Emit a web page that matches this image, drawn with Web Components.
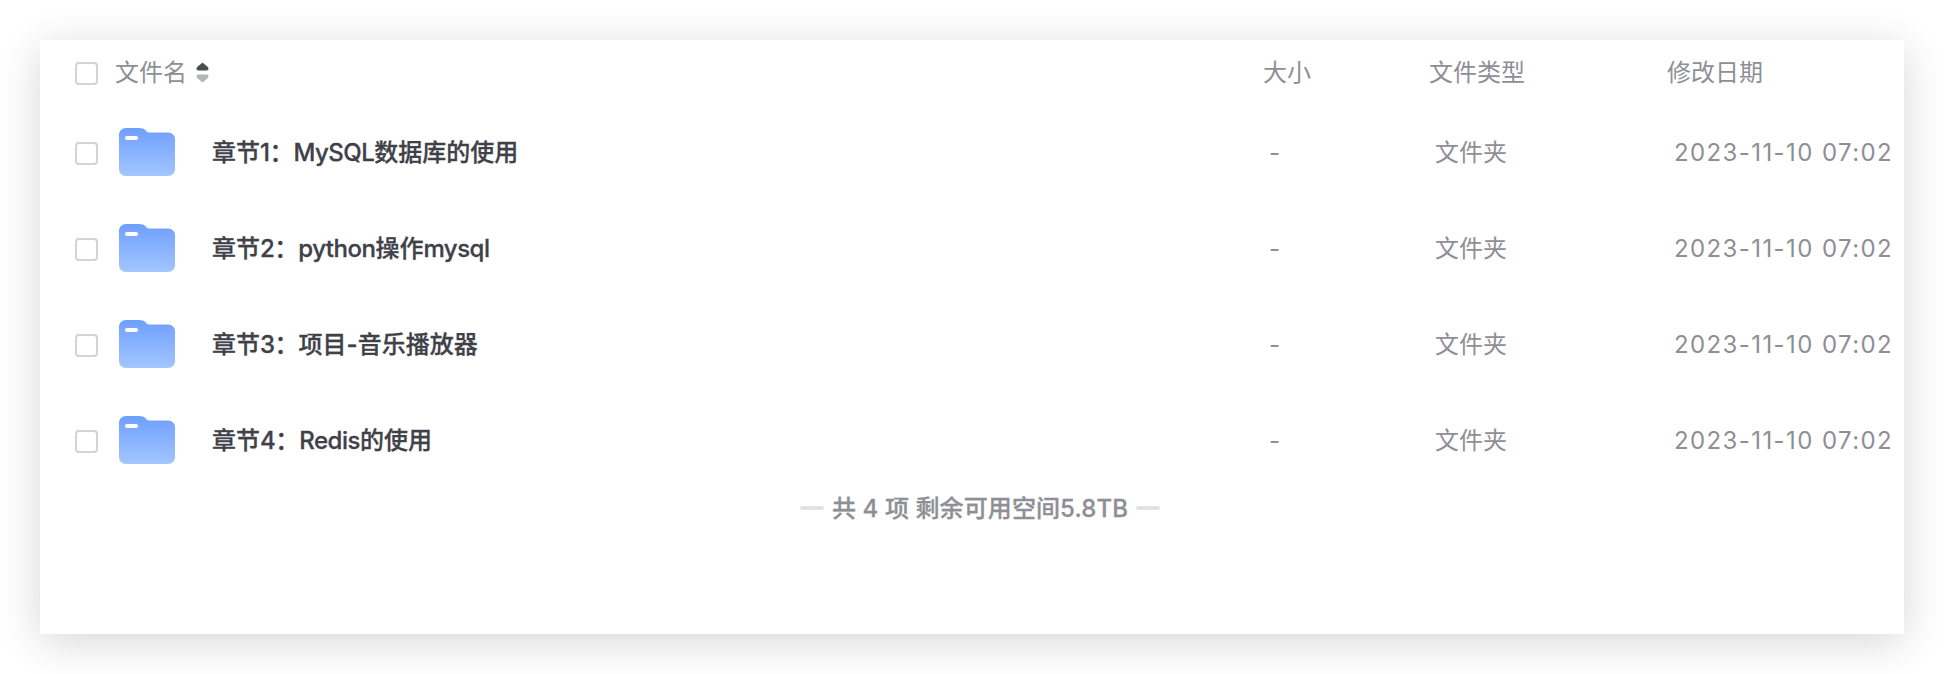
<!DOCTYPE html>
<html lang="zh">
<head>
<meta charset="utf-8">
<title>文件列表</title>
<style>
    html, body {
        margin: 0;
        background: #fff;
    }

    body {
        padding: 40px 40px 40px;
        height: 674px;
        box-sizing: border-box;
        overflow: hidden;
        font-family: Inter, "Noto Sans CJK SC", sans-serif;
    }

    .latin {
        letter-spacing: -0.5px;
    }
</style>
</head>
<body>

<template id="file-check-template">
    <style>
        :host {
            display: block;
            width: 23px;
            height: 23px;
            margin-top: 2px;
            box-sizing: border-box;
            border: 2px solid #d2d3d6;
            border-radius: 4px;
            background: #fff;
        }
    </style>
</template>

<template id="folder-icon-template">
    <style>
        :host {
            display: block;
            width: 56px;
            height: 48px;
        }

        svg {
            display: block;
        }
    </style>
    <svg width="56" height="48" viewBox="0 0 56 48">
        <defs>
            <linearGradient id="folderFill" x1="0" y1="0" x2="0" y2="1">
                <stop offset="0" stop-color="#6f9fff" />
                <stop offset="1" stop-color="#a3c6ff" />
            </linearGradient>
        </defs>
        <path fill="url(#folderFill)" d="M7 0H20C23.5 0 25.5 1.2 27.5 3.2C28.6 4.3 29.5 4.5 31 4.5H49C53 4.5 56 7.5 56 11V41C56 45 53 48 49 48H7C3 48 0 45 0 41V7C0 3 3 0 7 0Z" />
        <rect x="6" y="8" width="13" height="4" rx="2" fill="#fff" />
    </svg>
</template>

<template id="sort-caret-template">
    <style>
        :host {
            display: inline-block;
            width: 13px;
            height: 21px;
        }

        svg {
            display: block;
        }
    </style>
    <svg width="13" height="21" viewBox="0 0 13 21">
        <path fill="#4b4c50" d="M6.5 0.5L11.5 4.8C13 6.2 12.8 8.5 10.5 8.5H2.5C0.2 8.5 0 6.2 1.5 4.8Z" />
        <path fill="#b4b5b8" d="M6.5 20.5L11.5 16.2C13 14.8 12.8 12.5 10.5 12.5H2.5C0.2 12.5 0 14.8 1.5 16.2Z" />
    </svg>
</template>

<template id="file-header-template">
    <style>
        :host {
            display: grid;
            grid-template-columns: 1188px 166px 238px 1fr;
            align-items: center;
            height: 64px;
            padding-left: 35px;
            color: #8e8f95;
            font-size: 24px;
        }

        .label {
            padding-bottom: 4px;
        }

        .name {
            display: flex;
            align-items: center;
        }

        file-check {
            margin-right: 17px;
        }

        sort-caret {
            margin-left: 9px;
        }
    </style>
    <div class="name">
        <file-check></file-check>
        <span class="label">文件名</span>
        <sort-caret></sort-caret>
    </div>
    <div class="label">大小</div>
    <div class="label">文件类型</div>
    <div class="label">修改日期</div>
</template>

<template id="file-row-template">
    <style>
        :host {
            display: grid;
            grid-template-columns: 1188px 166px 238px 1fr;
            align-items: center;
            height: 96px;
            padding-left: 35px;
            color: #8e8f95;
            font-size: 24px;
        }

        .name {
            display: flex;
            align-items: center;
        }

        folder-icon {
            margin-left: 21px;
            margin-right: 37px;
        }

        .title {
            padding-bottom: 4px;
            color: #3f4149;
            font-weight: 500;
            -webkit-text-stroke: 0.3px #3f4149;
        }

        .size {
            padding-left: 6px;
        }

        .type {
            padding-left: 6px;
            padding-bottom: 4px;
        }

        .date {
            padding-left: 7px;
            letter-spacing: 1.4px;
            white-space: nowrap;
        }
    </style>
    <div class="name">
        <file-check></file-check>
        <folder-icon></folder-icon>
        <span class="title"><slot></slot></span>
    </div>
    <div class="size"></div>
    <div class="type"></div>
    <div class="date"></div>
</template>

<template id="list-summary-template">
    <style>
        :host {
            display: flex;
            justify-content: center;
            align-items: center;
            gap: 8px;
            height: 40px;
            padding-left: 16px;
            color: #8e8f95;
            font-size: 24px;
            font-weight: 500;
            -webkit-text-stroke: 0.3px #8e8f95;
            letter-spacing: 0.1px;
        }

        .text {
            padding-bottom: 4px;
        }

        .dash {
            width: 24px;
            height: 4px;
            border-radius: 2px;
            background: #e1e2e5;
        }
    </style>
    <span class="dash"></span>
    <span class="text"><slot></slot></span>
    <span class="dash"></span>
</template>

<template id="file-panel-template">
    <style>
        :host {
            display: block;
            height: 594px;
            background: #fff;
            box-shadow: 0 8px 40px rgba(0, 0, 0, 0.16);
        }
    </style>
    <file-header></file-header>
    <slot></slot>
    <list-summary><slot name="summary"></slot></list-summary>
</template>

<file-panel>
    <file-row size="-" type="文件夹" date="2023-11-10 07:02">章节<span class="latin">1</span>：<span class="latin">MySQL</span>数据库的使用</file-row>
    <file-row size="-" type="文件夹" date="2023-11-10 07:02">章节<span class="latin">2</span>：<span class="latin">python</span>操作<span class="latin">mysql</span></file-row>
    <file-row size="-" type="文件夹" date="2023-11-10 07:02">章节<span class="latin">3</span>：项目-音乐播放器</file-row>
    <file-row size="-" type="文件夹" date="2023-11-10 07:02">章节<span class="latin">4</span>：<span class="latin">Redis</span>的使用</file-row>
    <span slot="summary">共 4 项 剩余可用空间5.8TB</span>
</file-panel>

<script>
    (() => {

        const stamp = (id) => {
            const template = document.getElementById(id);
            return class extends HTMLElement {
                constructor() {
                    super();
                    this._shadowRoot = this.attachShadow({ mode: "open" });
                    this._shadowRoot.appendChild(template.content.cloneNode(true));
                }
            };
        };

        class FileRow extends stamp("file-row-template") {
            connectedCallback() {
                this._shadowRoot.querySelector(".size").textContent = this.getAttribute("size");
                this._shadowRoot.querySelector(".type").textContent = this.getAttribute("type");
                this._shadowRoot.querySelector(".date").textContent = this.getAttribute("date");
            }
        }

        customElements.define("file-check", stamp("file-check-template"));
        customElements.define("folder-icon", stamp("folder-icon-template"));
        customElements.define("sort-caret", stamp("sort-caret-template"));
        customElements.define("file-header", stamp("file-header-template"));
        customElements.define("file-row", FileRow);
        customElements.define("list-summary", stamp("list-summary-template"));
        customElements.define("file-panel", stamp("file-panel-template"));
    })();
</script>
</body>
</html>
